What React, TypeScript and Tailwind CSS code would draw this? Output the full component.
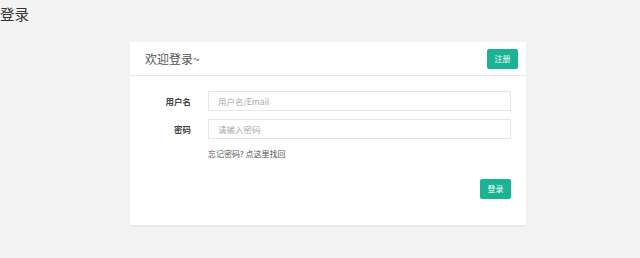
export default function App() {
  return (
    <div
      className="min-h-[258px] w-[640px] bg-[#f3f3f4] text-[#333]"
      style={{ fontFamily: '"Noto Sans CJK SC", "Noto Sans", sans-serif' }}
    >
      <h1 className="h-[42px] pt-[3px] text-[14.5px] leading-[22px]">登录</h1>
      <div className="ml-[130px] w-[396px] border-b border-[#e7eaec] bg-white shadow-[0_1px_1px_rgba(0,0,0,0.03)]">
        <div className="flex h-[34px] items-center justify-between border-b border-[#e7eaec] pl-[15px] pr-[8px]">
          <span className="text-[12px] text-[#555]">欢迎登录~</span>
          <button className="h-[20px] w-[31px] rounded-[2px] bg-[#1ab394] text-[8px] text-white">
            注册
          </button>
        </div>
        <div className="px-[15px] pt-[15px] pb-[26px]">
          <div className="flex items-center">
            <label className="w-[46px] text-right text-[8.5px] font-bold text-[#444]">用户名</label>
            <input
              className="ml-[17px] h-[20px] w-[303px] border border-[#e5e6e7] px-[9px] text-[8.5px] outline-none placeholder:text-[#aaa]"
              placeholder="用户名/Email"
            />
          </div>
          <div className="mt-[8px] flex items-center">
            <label className="w-[46px] text-right text-[8.5px] font-bold text-[#444]">密码</label>
            <input
              type="password"
              className="ml-[17px] h-[20px] w-[303px] border border-[#e5e6e7] px-[9px] text-[8.5px] outline-none placeholder:text-[#aaa]"
              placeholder="请输入密码"
            />
          </div>
          <div className="mt-[9px] pl-[63px] text-[8px] leading-[12px] text-[#555]">忘记密码? 点这里找回</div>
          <div className="mt-[19px] flex justify-end">
            <button className="h-[20px] w-[31px] rounded-[2px] bg-[#1ab394] text-[8px] text-white">
              登录
            </button>
          </div>
        </div>
      </div>
    </div>
  );
}
